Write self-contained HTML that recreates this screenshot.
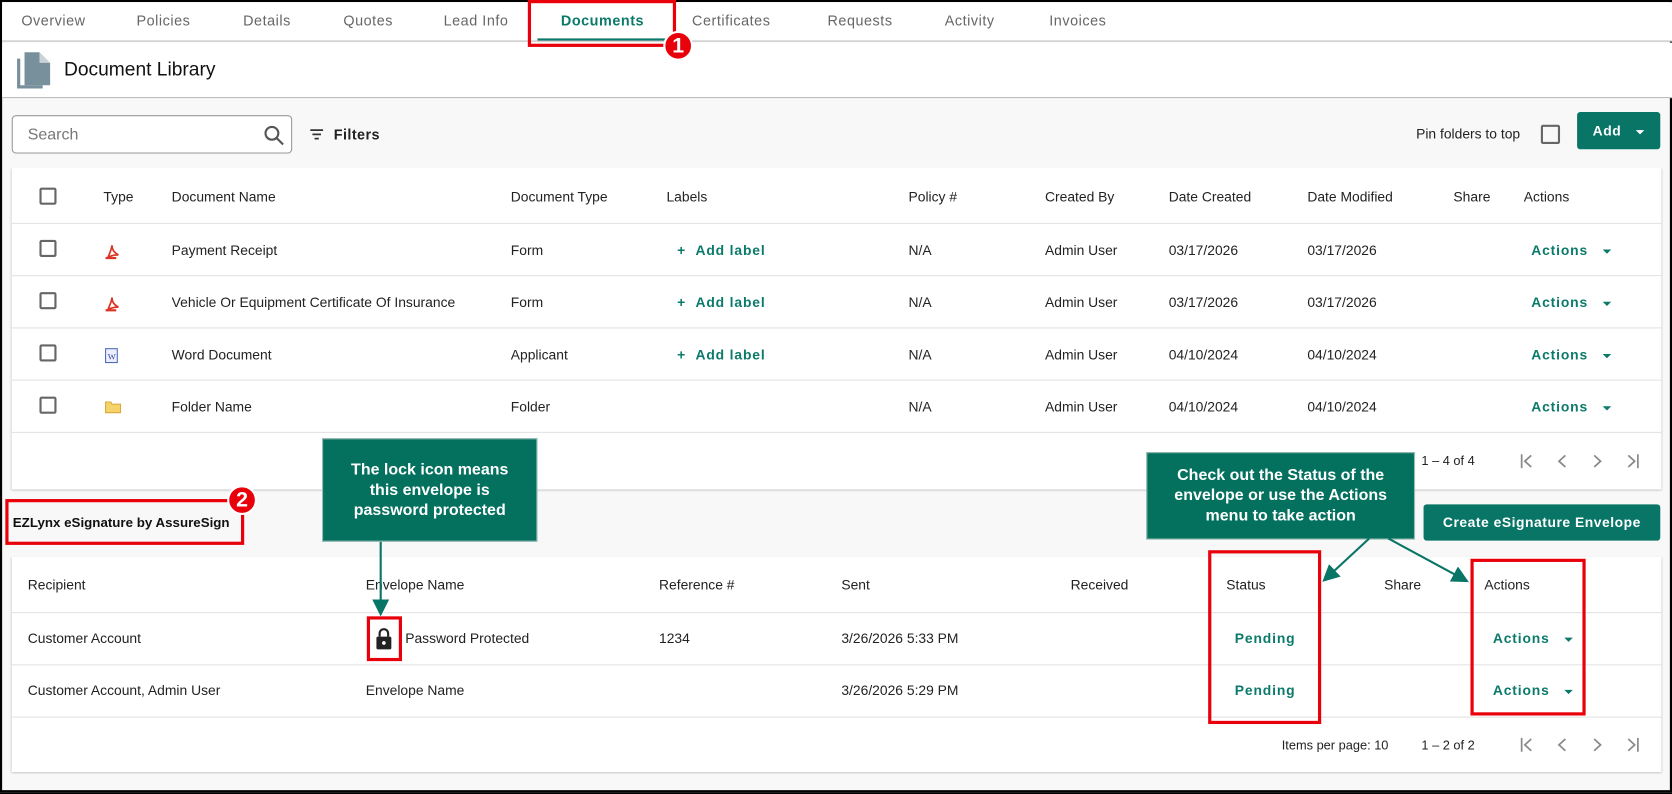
<!DOCTYPE html>
<html><head><meta charset="utf-8"><style>
*{box-sizing:border-box;margin:0;padding:0}
html,body{width:1672px;height:792px;overflow:hidden;background:#000}
#w{position:absolute;left:0;top:0;width:1568px;height:743px;transform:scale(1.06633);transform-origin:0 0;background:#f8f8f8;font-family:"Liberation Sans",Arial,sans-serif;color:#222;font-size:13px;border:2px solid #000}
.a{position:absolute;white-space:nowrap}
.tab{position:absolute;top:10px;color:#666;font-size:13.5px;letter-spacing:.5px}
.card{position:absolute;background:#fff;box-shadow:0 1px 2px rgba(0,0,0,.25)}
.hl{position:absolute;left:0;right:0;height:1px;background:#e2e2e2}
.cb{position:absolute;width:16px;height:16px;border:2px solid #666;border-radius:2px}
.red{position:absolute;border:3px solid #e8000b}
.badge{position:absolute;width:28px;height:28px;border-radius:50%;background:#e8000b;border:2px solid #fff;color:#fff;font-weight:bold;font-size:20px;text-align:center;line-height:24px}
.call{position:absolute;background:#04715f;color:#fff;font-weight:bold;font-size:15px;text-align:center;line-height:19px;border:1px solid #9bbdb6}
.act{position:absolute;color:#0b7a6b;font-weight:bold;letter-spacing:.8px}
.caret{display:inline-block;width:0;height:0;border-left:4px solid transparent;border-right:4px solid transparent;border-top:4px solid currentColor;margin-left:14px;vertical-align:middle}
.btn{position:absolute;background:#087566;color:#fff;font-weight:bold;border-radius:3px;text-align:center;letter-spacing:.5px}
</style></head><body><div id="w">
<div class="a" style="left:0;top:0;width:1566px;height:37px;background:#fff;border-bottom:1px solid #bbb"></div>
<div class="tab" style="left:18px">Overview</div>
<div class="tab" style="left:126px">Policies</div>
<div class="tab" style="left:226px">Details</div>
<div class="tab" style="left:320px">Quotes</div>
<div class="tab" style="left:414px">Lead Info</div>
<div class="tab" style="left:524px;color:#0b7a6b;font-weight:bold">Documents</div>
<div class="tab" style="left:647px">Certificates</div>
<div class="tab" style="left:774px">Requests</div>
<div class="tab" style="left:884px">Activity</div>
<div class="tab" style="left:982px">Invoices</div>
<div class="a" style="left:502px;top:34px;width:120px;height:2px;background:#0b7a6b"></div>
<div class="a" style="left:0;top:38px;width:1566px;height:52px;background:#fff;border-bottom:1px solid #bbb"></div>
<svg class="a" style="left:12px;top:45px" width="36" height="38" viewBox="0 0 36 38"><path d="M2 8v28h24v-3H5V8z" fill="#78909c"/><path d="M9 2h14l10 10v21H9z" fill="#78909c"/><path d="M23 2v10h10z" fill="#fff" opacity=".6"/></svg>
<div class="a" style="left:58px;top:53px;font-size:18px;color:#111">Document Library</div>
<div class="a" style="left:9px;top:106px;width:263px;height:36px;border:1px solid #999;border-radius:4px;background:#fff"></div>
<div class="a" style="left:24px;top:116px;font-size:15px;color:#777">Search</div>
<svg class="a" style="left:245px;top:115px" width="20" height="20" viewBox="0 0 20 20"><circle cx="8" cy="8" r="6" fill="none" stroke="#555" stroke-width="2"/><path d="M12.5 12.5l6 6" stroke="#555" stroke-width="2"/></svg>
<svg class="a" style="left:288px;top:118px" width="14" height="12" viewBox="0 0 14 12"><path d="M1 2h12M3 6h8M5 10h4" stroke="#333" stroke-width="1.6"/></svg>
<div class="a" style="left:311px;top:117px;font-weight:bold;font-size:13.5px;letter-spacing:.4px">Filters</div>
<div class="a" style="left:1326px;top:116px">Pin folders to top</div>
<div class="cb" style="left:1443px;top:115px;width:18px;height:18px"></div>
<div class="btn" style="left:1477px;top:103px;width:78px;height:35px;line-height:35px">Add<span class="caret" style="margin-left:14px"></span></div>

<div class="card" style="left:9px;top:155px;width:1547px;height:302px">
<div class="hl" style="top:52px"></div><div class="hl" style="top:101px"></div><div class="hl" style="top:150px"></div><div class="hl" style="top:199px"></div><div class="hl" style="top:248px"></div>
</div>
<div class="cb" style="left:35px;top:174px"></div>
<div class="cb" style="left:35px;top:223px"></div>
<div class="cb" style="left:35px;top:272px"></div>
<div class="cb" style="left:35px;top:321px"></div>
<div class="cb" style="left:35px;top:370px"></div>
<div class="a" style="top:175px;left:95px">Type</div>
<div class="a" style="top:175px;left:159px">Document Name</div>
<div class="a" style="top:175px;left:477px">Document Type</div>
<div class="a" style="top:175px;left:623px">Labels</div>
<div class="a" style="top:175px;left:850px">Policy #</div>
<div class="a" style="top:175px;left:978px">Created By</div>
<div class="a" style="top:175px;left:1094px">Date Created</div>
<div class="a" style="top:175px;left:1224px">Date Modified</div>
<div class="a" style="top:175px;left:1361px">Share</div>
<div class="a" style="top:175px;left:1427px">Actions</div>
<svg class="a" style="left:96px;top:226px" width="14" height="16"><path d="M3 14c2-5 4-9 4-12 0 4 2 7 6 9-4 0-8 1-10 3z" fill="none" stroke="#d32" stroke-width="1.6"/><rect x="1" y="13" width="10" height="2" fill="#d32"/></svg>
<svg class="a" style="left:96px;top:275px" width="14" height="16"><path d="M3 14c2-5 4-9 4-12 0 4 2 7 6 9-4 0-8 1-10 3z" fill="none" stroke="#d32" stroke-width="1.6"/><rect x="1" y="13" width="10" height="2" fill="#d32"/></svg>
<svg class="a" style="left:96px;top:323px" width="14" height="16"><rect x="1" y="2" width="11" height="13" fill="#eef" stroke="#4a6bb5"/><text x="3" y="12" font-size="8" fill="#2a4b95" font-family="Liberation Serif">W</text></svg>
<svg class="a" style="left:96px;top:373px" width="16" height="13"><path d="M1 2h5l1 2h8v8H1z" fill="#f5d36b" stroke="#d8a93a"/></svg>
<div class="a" style="top:225px;left:159px">Payment Receipt</div>
<div class="a" style="top:274px;left:159px">Vehicle Or Equipment Certificate Of Insurance</div>
<div class="a" style="top:323px;left:159px">Word Document</div>
<div class="a" style="top:372px;left:159px">Folder Name</div>
<div class="a" style="top:225px;left:477px">Form</div>
<div class="a" style="top:274px;left:477px">Form</div>
<div class="a" style="top:323px;left:477px">Applicant</div>
<div class="a" style="top:372px;left:477px">Folder</div>
<div class="act" style="top:225px;left:633px">+&nbsp;&nbsp;Add label</div>
<div class="act" style="top:274px;left:633px">+&nbsp;&nbsp;Add label</div>
<div class="act" style="top:323px;left:633px">+&nbsp;&nbsp;Add label</div>
<div class="a" style="top:225px;left:850px">N/A</div><div class="a" style="top:274px;left:850px">N/A</div><div class="a" style="top:323px;left:850px">N/A</div><div class="a" style="top:372px;left:850px">N/A</div>
<div class="a" style="top:225px;left:978px">Admin User</div><div class="a" style="top:274px;left:978px">Admin User</div><div class="a" style="top:323px;left:978px">Admin User</div><div class="a" style="top:372px;left:978px">Admin User</div>
<div class="a" style="top:225px;left:1094px">03/17/2026</div><div class="a" style="top:274px;left:1094px">03/17/2026</div><div class="a" style="top:323px;left:1094px">04/10/2024</div><div class="a" style="top:372px;left:1094px">04/10/2024</div>
<div class="a" style="top:225px;left:1224px">03/17/2026</div><div class="a" style="top:274px;left:1224px">03/17/2026</div><div class="a" style="top:323px;left:1224px">04/10/2024</div><div class="a" style="top:372px;left:1224px">04/10/2024</div>
<div class="act" style="top:225px;left:1434px">Actions<span class="caret"></span></div>
<div class="act" style="top:274px;left:1434px">Actions<span class="caret"></span></div>
<div class="act" style="top:323px;left:1434px">Actions<span class="caret"></span></div>
<div class="act" style="top:372px;left:1434px">Actions<span class="caret"></span></div>
<div class="a" style="top:423px;left:1331px;font-size:12px">1 – 4 of 4</div>
<svg class="a" style="left:1418px;top:421px" width="120" height="20"><g fill="none" stroke="#888" stroke-width="1.6"><path d="M7 3v13M16 4l-6 5.5 6 5.5"/><path d="M48 4l-6 5.5 6 5.5"/><path d="M75 4l6 5.5-6 5.5"/><path d="M107 4l6 5.5-6 5.5M116 3v13"/></g></svg>

<div class="a" style="left:10px;top:481px;font-weight:bold;font-size:12.5px;color:#111">EZLynx eSignature by AssureSign</div>
<div class="btn" style="left:1333px;top:471px;width:222px;height:34px;line-height:34px">Create eSignature Envelope</div>

<div class="card" style="left:9px;top:520px;width:1547px;height:202px">
<div class="hl" style="top:52px"></div><div class="hl" style="top:101px"></div><div class="hl" style="top:150px"></div>
</div>
<div class="a" style="top:539px;left:24px">Recipient</div>
<div class="a" style="top:539px;left:341px">Envelope Name</div>
<div class="a" style="top:539px;left:616px">Reference #</div>
<div class="a" style="top:539px;left:787px">Sent</div>
<div class="a" style="top:539px;left:1002px">Received</div>
<div class="a" style="top:539px;left:1148px">Status</div>
<div class="a" style="top:539px;left:1296px">Share</div>
<div class="a" style="top:539px;left:1390px">Actions</div>
<div class="a" style="top:589px;left:24px">Customer Account</div>
<div class="a" style="top:638px;left:24px">Customer Account, Admin User</div>
<svg class="a" style="left:350px;top:586px" width="16" height="22" viewBox="0 0 16 22"><path d="M4 9V6a4 4 0 0 1 8 0v3" fill="none" stroke="#222" stroke-width="2"/><rect x="1" y="9" width="14" height="12" rx="1.5" fill="#222"/><circle cx="8" cy="15" r="1.7" fill="#fff"/></svg>
<div class="a" style="top:589px;left:378px">Password Protected</div>
<div class="a" style="top:638px;left:341px">Envelope Name</div>
<div class="a" style="top:589px;left:616px">1234</div>
<div class="a" style="top:589px;left:787px">3/26/2026 5:33 PM</div>
<div class="a" style="top:638px;left:787px">3/26/2026 5:29 PM</div>
<div class="act" style="top:589px;left:1156px">Pending</div>
<div class="act" style="top:638px;left:1156px">Pending</div>
<div class="act" style="top:589px;left:1398px">Actions<span class="caret"></span></div>
<div class="act" style="top:638px;left:1398px">Actions<span class="caret"></span></div>
<div class="a" style="top:690px;left:1200px;font-size:12px">Items per page: 10</div>
<div class="a" style="top:690px;left:1331px;font-size:12px">1 – 2 of 2</div>
<svg class="a" style="left:1418px;top:687px" width="120" height="20"><g fill="none" stroke="#888" stroke-width="1.6"><path d="M7 3v13M16 4l-6 5.5 6 5.5"/><path d="M48 4l-6 5.5 6 5.5"/><path d="M75 4l6 5.5-6 5.5"/><path d="M107 4l6 5.5-6 5.5M116 3v13"/></g></svg>

<div class="call" style="left:300px;top:409px;width:202px;height:97px;padding-top:19px">The lock icon means<br>this envelope is<br>password protected</div>
<div class="call" style="left:1073px;top:422px;width:252px;height:82px;padding-top:11px">Check out the Status of the<br>envelope or use the Actions<br>menu to take action</div>
<svg class="a" style="left:0;top:0" width="1568" height="743">
<defs><marker id="m" markerWidth="8" markerHeight="8" refX="6" refY="4" orient="auto"><path d="M0 0L8 4L0 8z" fill="#087566"/></marker></defs>
<path d="M355 506V572" stroke="#087566" stroke-width="2" marker-end="url(#m)"/>
<path d="M1282 503L1241 541" stroke="#087566" stroke-width="2" marker-end="url(#m)"/>
<path d="M1300 503L1372 542" stroke="#087566" stroke-width="2" marker-end="url(#m)"/>
</svg>
<div class="red" style="left:493px;top:-2px;width:139px;height:44px"></div>
<div class="red" style="left:3px;top:466px;width:224px;height:43px"></div>
<div class="red" style="left:342px;top:576px;width:33px;height:42px"></div>
<div class="red" style="left:1131px;top:514px;width:106px;height:163px"></div>
<div class="red" style="left:1377px;top:522px;width:108px;height:147px"></div>
<div class="badge" style="left:620px;top:27px">1</div>
<div class="badge" style="left:211px;top:453px">2</div>
</div></body></html>
